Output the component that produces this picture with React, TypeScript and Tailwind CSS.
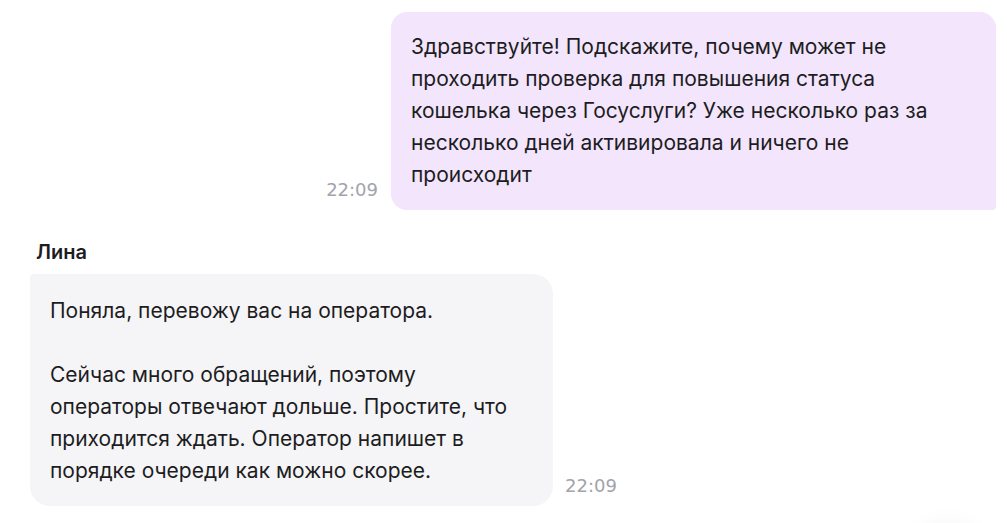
export default function App() {
  return (
    <div className="relative h-[523px] w-full overflow-hidden bg-white font-['Inter',sans-serif] text-[#1d1d1f]">
      <div className="flex flex-col pt-3 pr-[11px] pl-[30px]">
        {/* Outgoing message */}
        <div className="flex items-end justify-end gap-[13px]">
          <span className="mb-[11px] font-['DejaVu_Sans',sans-serif] text-[18px] leading-none text-[#a3a3ab]">
            22:09
          </span>
          <div className="w-[605px] rounded-2xl rounded-br-[4px] bg-[#f3e5fc] px-5 pt-[19px] pb-[19px] text-[21px] leading-[32px]">
            Здравствуйте! Подскажите, почему может не
            <br />
            проходить проверка для повышения статуса
            <br />
            кошелька через Госуслуги? Уже несколько раз за
            <br />
            несколько дней активировала и ничего не
            <br />
            происходит
          </div>
        </div>

        {/* Incoming message */}
        <div className="mt-[30px] flex flex-col">
          <span className="pl-[6px] text-[20px] leading-[24px] font-semibold text-[#1d1d1f]">Лина</span>
          <div className="mt-[10px] flex items-end gap-3">
            <div className="w-[523px] rounded-[20px] rounded-tl-[4px] bg-[#f5f5f7] px-5 pt-[21px] pb-[19px] text-[21px] leading-[32px]">
              <p>Поняла, перевожу вас на оператора.</p>
              <p className="mt-8">
                Сейчас много обращений, поэтому
                <br />
                операторы отвечают дольше. Простите, что
                <br />
                приходится ждать. Оператор напишет в
                <br />
                порядке очереди как можно скорее.
              </p>
            </div>
            <span className="mb-[11px] font-['DejaVu_Sans',sans-serif] text-[18px] leading-none text-[#a3a3ab]">
              22:09
            </span>
          </div>
        </div>
      </div>

      {/* faint shadow of a floating button below the fold */}
      <div className="absolute top-[528px] left-[915px] h-[64px] w-[64px] rounded-full bg-white shadow-[0_0_28px_rgba(0,0,0,0.07)]" />
    </div>
  )
}
